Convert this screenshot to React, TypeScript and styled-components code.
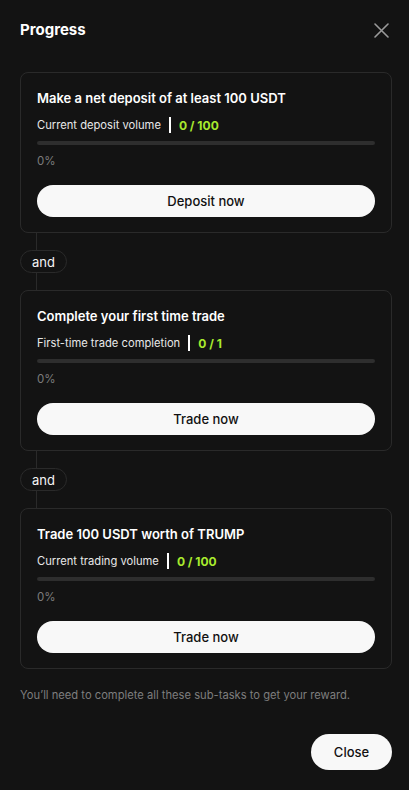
import React from 'react';
import styled, { createGlobalStyle } from 'styled-components';

const GlobalStyle = createGlobalStyle`
  html, body {
    margin: 0;
    padding: 0;
    background: #131313;
  }
  body {
    font-family: Inter, "Liberation Sans", Arial, sans-serif;
    -webkit-font-smoothing: antialiased;
  }
`;

const Panel = styled.div`
  width: 409px;
  height: 790px;
  box-sizing: border-box;
  background: #131313;
  padding: 20px 17px 0 20px;
  display: flex;
  flex-direction: column;
  color: #f5f5f5;
`;

const Header = styled.div`
  display: flex;
  align-items: center;
  justify-content: space-between;
  height: 20px;
`;

const Title = styled.h1`
  margin: 0;
  font-size: 15px;
  font-weight: 700;
  line-height: 20px;
  color: #ffffff;
`;

const CloseIcon = styled.button`
  background: none;
  border: none;
  padding: 0;
  margin-right: 3px;
  width: 16px;
  height: 16px;
  display: flex;
  align-items: center;
  justify-content: center;
  color: #9a9a9a;
  cursor: pointer;
`;

const TaskList = styled.div`
  margin-top: 32px;
  display: flex;
  flex-direction: column;
`;

const Card = styled.div`
  border: 1px solid #2a2a2a;
  border-radius: 8px;
  padding: 15px 16px 15px 16px;
  display: flex;
  flex-direction: column;
`;

const CardTitle = styled.div`
  font-size: 13px;
  font-weight: 600;
  line-height: 20px;
  color: #ffffff;
`;

const MetricRow = styled.div`
  margin-top: 9px;
  display: flex;
  align-items: center;
  height: 16px;
  font-size: 11.2px;
  color: #e8e8e8;
`;

const Divider = styled.span`
  width: 2px;
  height: 16px;
  background: #ffffff;
  margin: 0 8px;
`;

const Metric = styled.span`
  color: #a8ea2e;
  font-weight: 700;
  font-size: 12px;
`;

const Track = styled.div`
  margin-top: 8px;
  height: 4px;
  border-radius: 2px;
  background: #2e2e2e;
  overflow: hidden;
`;

const Fill = styled.div`
  height: 100%;
  background: #a8ea2e;
`;

const Percent = styled.div`
  margin-top: 8px;
  font-size: 11.5px;
  line-height: 16px;
  color: #7c7c7c;
`;

const ActionButton = styled.button`
  margin-top: 16px;
  height: 32px;
  border: none;
  border-radius: 16px;
  background: #f8f8f8;
  color: #111111;
  font-family: inherit;
  font-size: 13px;
  font-weight: 500;
  cursor: pointer;
`;

const Connector = styled.div`
  display: flex;
  flex-direction: column;
  align-items: flex-start;
`;

const Line = styled.div`
  width: 1px;
  height: 17px;
  background: #2a2a2a;
  margin-left: 16px;
`;

const AndPill = styled.div`
  height: 23px;
  box-sizing: border-box;
  padding: 0 11px;
  border: 1px solid #2a2a2a;
  border-radius: 12px;
  display: flex;
  align-items: center;
  font-size: 13px;
  color: #f5f5f5;
`;

const Note = styled.p`
  margin: 19px 0 0 0;
  font-size: 11.2px;
  line-height: 14px;
  color: #7e7e7e;
`;

const Footer = styled.div`
  margin-top: 32px;
  display: flex;
  justify-content: flex-end;
`;

const CloseButton = styled.button`
  width: 81px;
  height: 36px;
  border: none;
  border-radius: 18px;
  background: #f8f8f8;
  color: #111111;
  font-family: inherit;
  font-size: 13px;
  font-weight: 500;
  cursor: pointer;
`;

type Task = {
  title: string;
  label: string;
  current: number;
  target: number;
  action: string;
};

const tasks: Task[] = [
  { title: 'Make a net deposit of at least 100 USDT', label: 'Current deposit volume', current: 0, target: 100, action: 'Deposit now' },
  { title: 'Complete your first time trade', label: 'First-time trade completion', current: 0, target: 1, action: 'Trade now' },
  { title: 'Trade 100 USDT worth of TRUMP', label: 'Current trading volume', current: 0, target: 100, action: 'Trade now' },
];

const TaskCard: React.FC<{ task: Task }> = ({ task }) => {
  const pct = Math.round((task.current / task.target) * 100);
  return (
    <Card>
      <CardTitle>{task.title}</CardTitle>
      <MetricRow>
        {task.label}
        <Divider />
        <Metric>{task.current} / {task.target}</Metric>
      </MetricRow>
      <Track>
        <Fill style={{ width: `${pct}%` }} />
      </Track>
      <Percent>{pct}%</Percent>
      <ActionButton>{task.action}</ActionButton>
    </Card>
  );
};

const App: React.FC = () => {
  return (
    <>
      <GlobalStyle />
      <Panel>
        <Header>
          <Title>Progress</Title>
          <CloseIcon aria-label="close">
            <svg width="15" height="15" viewBox="0 0 15 15" fill="none">
              <path d="M1 1L14 14M14 1L1 14" stroke="currentColor" strokeWidth="1.6" strokeLinecap="round" />
            </svg>
          </CloseIcon>
        </Header>

        <TaskList>
          {tasks.map((task, i) => (
            <React.Fragment key={i}>
              {i > 0 && (
                <Connector>
                  <Line />
                  <AndPill>and</AndPill>
                  <Line />
                </Connector>
              )}
              <TaskCard task={task} />
            </React.Fragment>
          ))}
        </TaskList>

        <Note>You’ll need to complete all these sub-tasks to get your reward.</Note>

        <Footer>
          <CloseButton>Close</CloseButton>
        </Footer>
      </Panel>
    </>
  );
};

export default App;
